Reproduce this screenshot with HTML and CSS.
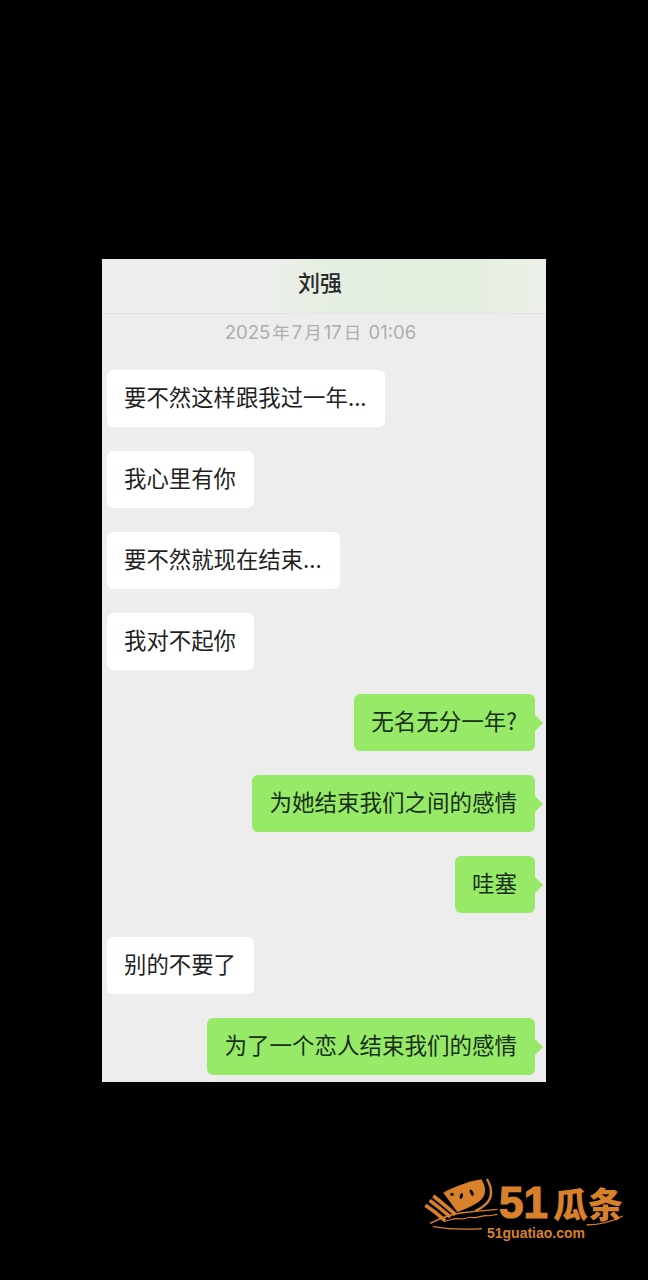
FILE: index.html
```html
<!DOCTYPE html>
<html lang="zh">
<head>
<meta charset="utf-8">
<title>刘强</title>
<link rel="stylesheet" href="styles.css">
</head>
<body>
<main class="screen">
  <section class="phone">
    <header class="head">刘强</header>
    <div class="time">2025<span class="cj">年</span>7<span class="cj">月</span>17<span class="cj">日</span> 01:06</div>
    <div class="chat">
      <div class="msg in">要不然这样跟我过一年...</div>
      <div class="msg in">我心里有你</div>
      <div class="msg in">要不然就现在结束...</div>
      <div class="msg in">我对不起你</div>
      <div class="msg out">无名无分一年?</div>
      <div class="msg out">为她结束我们之间的感情</div>
      <div class="msg out">哇塞</div>
      <div class="msg in">别的不要了</div>
      <div class="msg out">为了一个恋人结束我们的感情</div>
    </div>
  </section>
  <footer class="brand">
    <svg class="art" viewBox="0 0 630 210" aria-hidden="true">
      <path d="M70 62 C105 44 145 28 184 22 C196 40 200 62 188 78 C172 97 140 110 112 120 Z" fill="#d9802b"/>
      <circle cx="96" cy="67" r="5" fill="#000"/>
      <ellipse cx="124" cy="72" rx="4.5" ry="9" fill="#000" transform="rotate(15 124 72)"/>
      <ellipse cx="155" cy="62" rx="4.5" ry="10" fill="#000" transform="rotate(-25 155 62)"/>
      <path d="M201 21 C217 50 218 78 196 98 C186 107 176 113 166 117" fill="none" stroke="#d9802b" stroke-width="7"/>
      <path d="M40 72 C62 90 85 108 106 128 M29 85 C50 101 72 118 91 135 M16 100 C36 113 56 128 75 146" fill="none" stroke="#d9802b" stroke-width="11"/>
      <path d="M30 154 C65 136 110 122 150 120 C180 117 205 115 232 112" fill="none" stroke="#d9802b" stroke-width="4"/>
      <path d="M72 148 C90 146 100 138 115 140 C130 145 140 134 155 136 C170 140 185 130 200 131 C212 133 222 128 232 127" fill="none" stroke="#d9802b" stroke-width="3.5"/>
      <path d="M40 164 C85 172 135 173 186 170" fill="none" stroke="#d9802b" stroke-width="4"/>
      <path d="M500 159 C535 158 575 150 608 132" fill="none" stroke="#d9802b" stroke-width="4"/>
    </svg>
    <div class="mark"><span class="digits">51</span><span class="markcj">瓜条</span></div>
    <div class="url">51guatiao.com</div>
  </footer>
</main>
</body>
</html>
```
FILE: styles.css
```css
* { box-sizing: border-box; }
html, body { margin: 0; background: #000; }
.screen {
  width: 648px;
  height: 1280px;
  padding: 259px 0 0 102px;
  position: relative;
  overflow: hidden;
  font-family: "Noto Sans CJK SC", "Liberation Sans", sans-serif;
}
.phone {
  width: 444px;
  height: 823px;
  background: #ededed;
  overflow: hidden;
}
.head {
  height: 55px;
  padding-right: 8px;
  text-align: center;
  font-size: 22px;
  font-weight: 500;
  line-height: 44px;
  color: #2a2a2a;
  background: linear-gradient(90deg, #eeeeee 33%, #e5efe1 52%, #e5efdf 85%, #edf0ea 100%);
  border-bottom: 1px solid #e3e3e3;
}
.time {
  height: 38px;
  padding-right: 7px;
  text-align: center;
  font-family: "Inter", "Noto Sans CJK SC", sans-serif;
  font-size: 18.5px;
  line-height: 36px;
  color: #adadad;
}
.cj { font-family: "Noto Sans CJK SC", sans-serif; font-size: 17.5px; padding: 0 2px; }
.chat {
  display: flex;
  flex-direction: column;
  gap: 24px;
  padding: 18px 11px 0 5px;
}
.msg {
  height: 57px;
  padding: 0 17px;
  font-size: 22.4px;
  line-height: 52px;
  color: #1f1f1f;
  border-radius: 6px;
  width: fit-content;
  position: relative;
  white-space: nowrap;
}
.in { background: #fff; padding-right: 18px; }
.out { background: #97e968; align-self: flex-end; padding-right: 18px; font-size: 22.5px; color: #17301a; }
.out::after {
  content: "";
  position: absolute;
  right: -8px;
  top: 21px;
  border-left: 8px solid #97e968;
  border-top: 8px solid transparent;
  border-bottom: 8px solid transparent;
}
.brand {
  position: absolute;
  left: 420px;
  top: 1172px;
  width: 210px;
  height: 70px;
  color: #d9802b;
}
.art { position: absolute; left: 0; top: 0; width: 210px; height: 70px; }
.mark {
  position: absolute;
  left: 79px;
  top: 9px;
  height: 44px;
  display: flex;
  align-items: center;
  white-space: nowrap;
}
.digits {
  font-family: "Liberation Sans", sans-serif;
  font-weight: 700;
  font-size: 44px;
  line-height: 44px;
  width: 54px;
  -webkit-text-stroke: 1.2px #d9802b;
}
.markcj {
  font-family: "Noto Sans CJK SC", sans-serif;
  font-weight: 900;
  font-size: 35px;
  line-height: 44px;
}
.url {
  position: absolute;
  left: 67px;
  top: 53px;
  font-family: "Liberation Sans", sans-serif;
  font-weight: 700;
  font-size: 14px;
  line-height: 16px;
  white-space: nowrap;
}
```
